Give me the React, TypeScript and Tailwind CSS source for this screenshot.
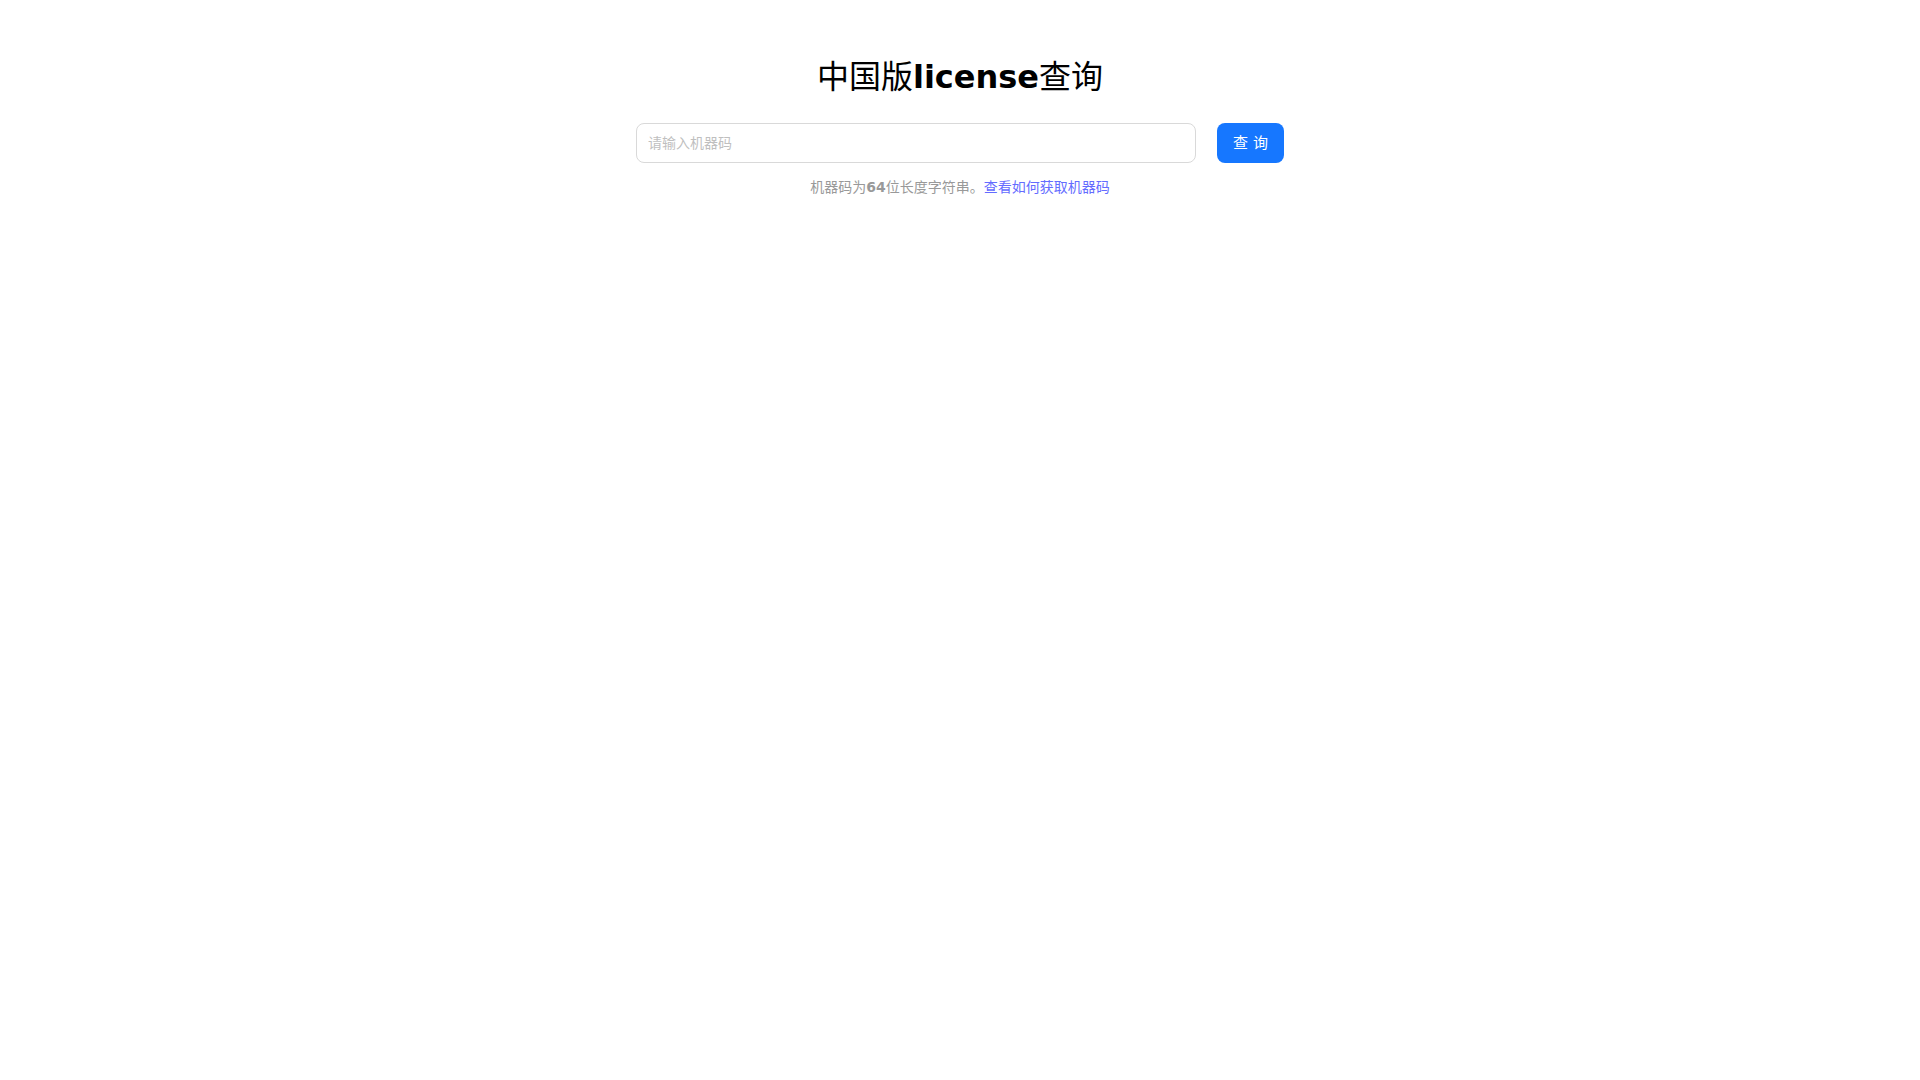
import { useState } from "react";

export default function App() {
  const [code, setCode] = useState("");

  return (
    <div
      className="min-h-screen bg-white text-black"
      style={{ fontFamily: '"DejaVu Sans", "Noto Sans CJK SC", sans-serif' }}
    >
      <div className="flex flex-col items-center pt-[57px]">
        <h1 className="text-[32px] leading-[40px] font-normal">
          中国版<span className="font-bold">license</span>查询
        </h1>

        <div className="mt-[26px] flex items-center gap-[21px]">
          <input
            value={code}
            onChange={(e) => setCode(e.target.value)}
            placeholder="请输入机器码"
            className="h-10 w-[560px] rounded-lg border border-[#d9d9d9] bg-white px-[11px] text-[14px] text-black outline-none placeholder:text-[#bfbfbf] focus:border-[#4096ff]"
          />
          <button
            type="button"
            className="h-10 w-[67px] rounded-lg bg-[#1677ff] text-[15px] font-normal text-white hover:bg-[#4096ff]"
          >
            查 询
          </button>
        </div>

        <p className="mt-[13px] text-[14px] leading-[22px] text-[#999]">
          机器码为<span className="font-bold">64</span>位长度字符串。
          <a href="#" className="text-[#646cff]">
            查看如何获取机器码
          </a>
        </p>
      </div>
    </div>
  );
}
